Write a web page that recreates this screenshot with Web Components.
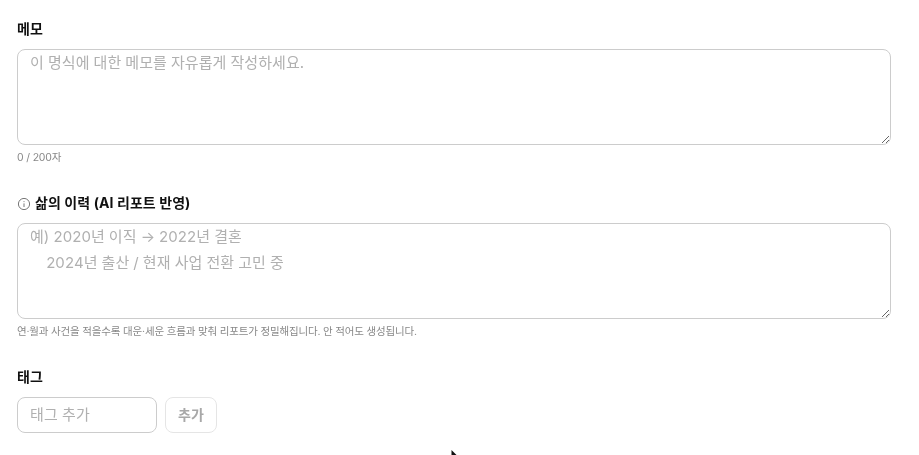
<!DOCTYPE html>
<html lang="ko">
<head>
<meta charset="utf-8">
<style>
  html, body { height: 100%; }
  body {
    margin: 0;
    background: #fff;
    overflow: hidden;
    font-family: Inter, "Noto Sans CJK KR", sans-serif;
  }
</style>
</head>
<body>
<memo-form></memo-form>
<mouse-pointer></mouse-pointer>

<script>
class FormField extends HTMLElement {
  constructor() {
    super();
    this.attachShadow({ mode: "open" });
  }

  connectedCallback() {
    this.render();
  }

  render() {
    this.shadowRoot.innerHTML = `
      <style>
        :host { display: block; }
        .label {
          display: flex;
          align-items: center;
          gap: 4px;
          height: 20px;
          margin-bottom: 10px;
          font-size: 14px;
          line-height: 18px;
          font-weight: 700;
          letter-spacing: 0.08px;
          color: #111;
        }
        .label span { padding-bottom: 1px; }
        .hint {
          margin-top: 6px;
          height: 14px;
          line-height: 14px;
          font-size: 10.5px;
          letter-spacing: -0.17px;
          color: #888;
        }
        .hint:empty { display: none; }
      </style>
      <div class="label"><slot name="icon"></slot><span>${this.getAttribute("label")}</span></div>
      <slot></slot>
      <div class="hint">${this.getAttribute("hint") || ""}</div>
    `;
  }
}

class MemoBox extends HTMLElement {
  constructor() {
    super();
    this.attachShadow({ mode: "open" });
  }

  connectedCallback() {
    this.shadowRoot.innerHTML = `
      <style>
        :host { display: block; }
        textarea {
          display: block;
          box-sizing: border-box;
          width: 100%;
          height: 96px;
          margin: 0;
          padding: 0 12px;
          border: 1px solid #ccc;
          border-radius: 8px;
          outline: none;
          background: #fff;
          font: 15px/25.6px Inter, "Noto Sans CJK KR", sans-serif;
          word-spacing: -0.25px;
          letter-spacing: 0.07px;
          color: #111;
          resize: vertical;
        }
        textarea::placeholder { color: #b0b0b0; opacity: 1; }
      </style>
      <textarea></textarea>
    `;
    this.shadowRoot.querySelector("textarea").placeholder =
      this.getAttribute("placeholder").replace(/\\n/g, "\n");
  }
}

class TagInput extends HTMLElement {
  constructor() {
    super();
    this.attachShadow({ mode: "open" });
  }

  connectedCallback() {
    this.shadowRoot.innerHTML = `
      <style>
        :host { display: flex; gap: 8px; }
        input {
          box-sizing: border-box;
          width: 140px;
          height: 36px;
          margin: 0;
          padding: 0 12px 2px;
          border: 1px solid #ccc;
          border-radius: 8px;
          outline: none;
          font: 15px Inter, "Noto Sans CJK KR", sans-serif;
          letter-spacing: 0.1px;
        }
        input::placeholder { color: #b0b0b0; opacity: 1; }
        button {
          box-sizing: border-box;
          width: 52px;
          height: 36px;
          padding: 0 0 3px;
          border: 1px solid #e5e5e5;
          border-radius: 8px;
          background: #fff;
          font: 700 14px Inter, "Noto Sans CJK KR", sans-serif;
          color: #a8a8a8;
        }
      </style>
      <input type="text" placeholder="태그 추가">
      <button type="button">추가</button>
    `;
  }
}

class MemoForm extends HTMLElement {
  constructor() {
    super();
    this.attachShadow({ mode: "open" });
  }

  connectedCallback() {
    this.shadowRoot.innerHTML = `
      <style>
        :host {
          display: flex;
          flex-direction: column;
          gap: 28px;
          padding: 19px 28px 0 17px;
          will-change: transform; /* grayscale text, like the reference */
        }
        svg { display: block; width: 14px; height: 14px; margin-top: 1px; }
      </style>
      <form-field label="메모" hint="0 / 200자">
        <memo-box placeholder="이 명식에 대한 메모를 자유롭게 작성하세요."></memo-box>
      </form-field>
      <form-field label="삶의 이력 (AI 리포트 반영)" hint="연·월과 사건을 적을수록 대운·세운 흐름과 맞춰 리포트가 정밀해집니다. 안 적어도 생성됩니다.">
        <svg slot="icon" viewBox="0 0 14 14" fill="none" stroke="#777" stroke-width="1">
          <circle cx="7" cy="7" r="5.6"/>
          <path d="M7 6.4V10"/>
          <path d="M7 4.2V5.1"/>
        </svg>
        <memo-box placeholder="예) 2020년 이직 → 2022년 결혼\\n    2024년 출산 / 현재 사업 전환 고민 중"></memo-box>
      </form-field>
      <form-field label="태그">
        <tag-input></tag-input>
      </form-field>
    `;
  }
}

class MousePointer extends HTMLElement {
  constructor() {
    super();
    this.attachShadow({ mode: "open" });
  }

  connectedCallback() {
    this.shadowRoot.innerHTML = `
      <style>
        :host { position: absolute; left: 451px; top: 450px; width: 8px; height: 5px; }
        svg { display: block; }
      </style>
      <svg width="8" height="5" viewBox="0 0 8 5"><path d="M0.5 0V5H5.5L0.5 0Z" fill="#111"/></svg>
    `;
  }
}

customElements.define("form-field", FormField);
customElements.define("memo-box", MemoBox);
customElements.define("tag-input", TagInput);
customElements.define("memo-form", MemoForm);
customElements.define("mouse-pointer", MousePointer);
</script>
</body>
</html>
